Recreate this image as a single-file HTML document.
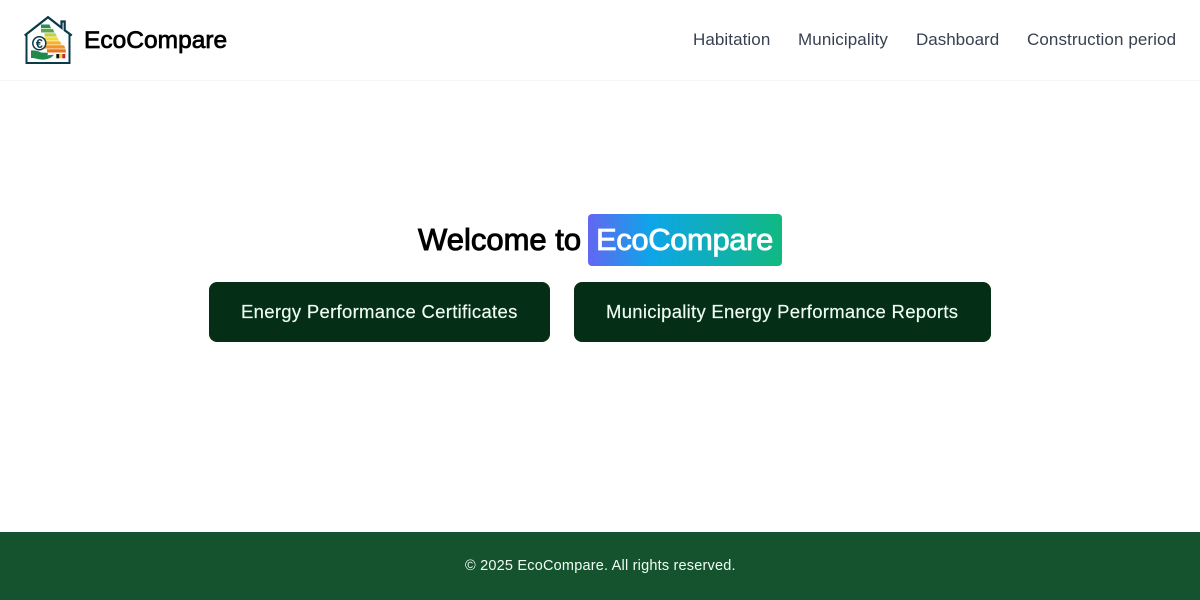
<!DOCTYPE html>
<html lang="en"><head><meta charset="utf-8"><title>EcoCompare</title>
<style>
*{box-sizing:border-box}
html,body{margin:0;padding:0;width:1200px;height:600px;overflow:hidden;background:#fff;font-family:"Liberation Sans",sans-serif}
.t{position:absolute;white-space:nowrap}
header{position:absolute;left:0;top:0;width:1200px;height:81px;border-bottom:1px solid #f3f4f6;background:#fff}
.nav{top:29px;font-size:17px;line-height:22px;color:#374151}
.btn{position:absolute;top:282px;height:60px;background:#052e16;border-radius:8px}
.btxt{top:300px;font-size:18.5px;line-height:24px;color:#f0fdf4;-webkit-text-stroke:.15px #f0fdf4}
footer{position:absolute;left:0;top:532px;width:1200px;height:68px;background:#14532d}
.h{top:222px;font-size:31px;line-height:36px;font-weight:400}
</style></head><body>
<header>
<svg style="position:absolute;left:20px;top:12px" width="56" height="56" viewBox="20 12 56 56">
<path d="M24.700 35.500 48 17.200 61.500 27.800V21.500H64.700V30.300L71.800 35.500" fill="none" stroke="#0b3b49" stroke-width="2.200"/>
<path d="M26.500 33.500V63H69.500V33.500" fill="none" stroke="#0b3b49" stroke-width="2"/>
<path d="M41 24.500H49.500L51 28.300H41Z" fill="#2a8f4c"/>
<path d="M41 29H53L54.500 32.500H41Z" fill="#5fa848"/>
<path d="M44.500 33.200H55.500L57 36.600H44.500Z" fill="#c8cf3c"/>
<path d="M44.500 37.200H57.500L59 40.600H44.500Z" fill="#f8d53a"/>
<path d="M44.500 41.200H60L61.500 44.600H44.500Z" fill="#f6b42e"/>
<path d="M44.500 45.200H64L65.500 48.600H44.500Z" fill="#f0942a"/>
<path d="M47 49.200H65.500L66 52.500H47Z" fill="#e67626"/>
<circle cx="39.300" cy="43.300" r="6.500" fill="#fff" stroke="#0b3b49" stroke-width="1.500"/>
<text x="39.300" y="47.800" text-anchor="middle" font-family="Liberation Sans" font-size="12.500" font-weight="700" fill="#0b3b49">€</text>
<path d="M31 50.500C35 50 38 51 41 52.500L46.500 52.800C48.500 53 48.500 55 46.500 55.300L53.800 54.800C51.500 58.500 46 60 41 59.500C37 59 34 57.800 31 58Z" fill="#1f8a4c"/>
<rect x="56.300" y="54" width="3" height="4.300" fill="#111"/>
<rect x="59.300" y="54" width="3" height="4.300" fill="#f5d33f"/>
<rect x="62.300" y="54" width="3" height="4.300" fill="#d3232a"/>
</svg>
<div class="t" style="left:84px;top:25px;font-size:24.500px;line-height:32px;font-weight:400;color:#000;-webkit-text-stroke:.75px #000;letter-spacing:.02px">EcoCompare</div>
<div class="t nav" style="left:693px;letter-spacing:.08px">Habitation</div>
<div class="t nav" style="left:798px;letter-spacing:.1px">Municipality</div>
<div class="t nav" style="left:916px;letter-spacing:0">Dashboard</div>
<div class="t nav" style="left:1027px;letter-spacing:.09px">Construction period</div>
</header>
<div class="t h" style="left:418px;color:#000;-webkit-text-stroke:.95px #000">Welcome to</div>
<div style="position:absolute;left:588px;top:214px;width:194px;height:52px;border-radius:4px;background:linear-gradient(90deg,#6366f1,#0ea5e9 32%,#10b981)"></div>
<div class="t h" style="left:596px;color:#fff;-webkit-text-stroke:.8px #fff;letter-spacing:-.4px">EcoCompare</div>
<div class="btn" style="left:209px;width:341px"></div>
<div class="btn" style="left:574px;width:417px"></div>
<div class="t btxt" style="left:241px;letter-spacing:.3px">Energy Performance Certificates</div>
<div class="t btxt" style="left:606px;letter-spacing:.28px">Municipality Energy Performance Reports</div>
<footer></footer>
<div class="t" style="left:465px;top:556px;font-size:14.500px;line-height:20px;color:#f0fdf4;letter-spacing:.2px">© 2025 EcoCompare. All rights reserved.</div>
</body></html>
